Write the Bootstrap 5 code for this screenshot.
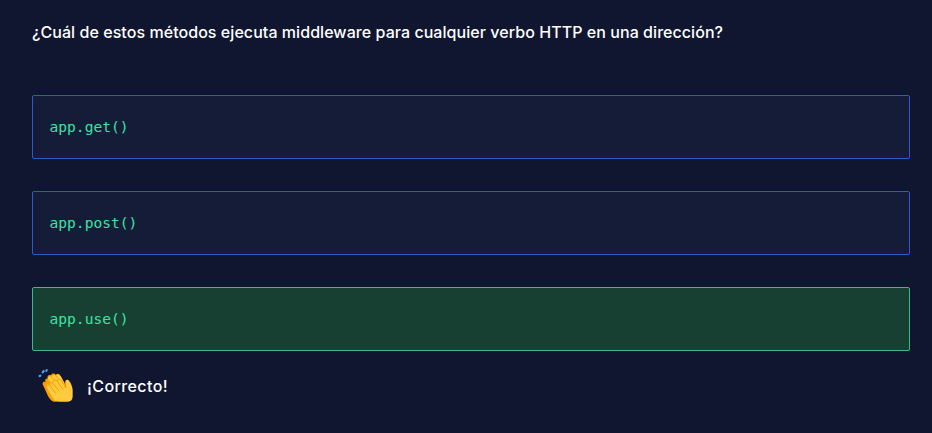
<!DOCTYPE html>
<html lang="es">
<head>
<meta charset="utf-8">
<meta name="viewport" content="width=device-width, initial-scale=1">
<title>Cuestionario</title>
<link rel="stylesheet" href="https://cdn.jsdelivr.net/npm/bootstrap@5.3.0/dist/css/bootstrap.min.css">
<style>
body{background:#10162f;color:#fff;font-family:Inter,"Liberation Sans",sans-serif;font-size:16px;overflow:hidden}
.quiz{padding:20px 22px 0 32px}
.question{font-size:16px;font-weight:500;line-height:24px;margin-bottom:51px;white-space:nowrap;letter-spacing:.055px}
.answers{gap:32px}
.answer{height:64px;padding:0 16.5px;border:1px solid #2a5bc9;border-radius:2px;background:#151c38}
.answer code{font-family:"DejaVu Sans Mono",monospace;font-size:14.6px;line-height:24px;color:#3ce3a4}
.answer-right{background:#184032;border-color:#3db88b}
.feedback{padding:15px 0 0 6px;gap:11px}
.feedback-text{font-weight:500;line-height:24px;padding-top:2px;letter-spacing:.4px}
</style>
<script src="https://cdn.jsdelivr.net/npm/bootstrap@5.3.0/dist/js/bootstrap.bundle.min.js"></script>
</head>
<body>
<main class="quiz">
  <h1 class="question"><span>¿Cuál de estos métodos ejecuta middleware para cualquier verbo HTTP en una dirección?</span></h1>
  <div class="answers d-flex flex-column">
    <div class="answer d-flex align-items-center"><code>app.get()</code></div>
    <div class="answer d-flex align-items-center"><code>app.post()</code></div>
    <div class="answer answer-right d-flex align-items-center"><code>app.use()</code></div>
  </div>
  <div class="feedback d-flex align-items-center">
    <svg width="38" height="38" viewBox="24 18 114 114" aria-hidden="true">
      <g stroke="#42a5f5" stroke-width="6.5" stroke-linecap="round">
        <path d="M29 48l2-1M38 37l3-4M49 33l1-3"/>
      </g>
      <path fill="#f59f00" d="M38 71c0-5 4-7 9-4-4-6 0-13 6-11-3-7 3-13 10-10 2-7 10-7 14-2 5-5 12-3 14 3l22 40-34 38H72c-8-2-13-8-18-17L40 77q-2-3-2-6z"/>
      <path fill="#ffca3e" d="M54 58c-2-8 6-12 11-6 0-7 8-10 13-4 4-6 11-5 14 1l12 21-24 18z"/>
      <path fill="#ffca3e" d="M50 76c1-4 6-4 9 0-2-6 4-11 9-7 0-8 7-12 13-6 3-7 11-6 15 1l10 15V65c0-6 8-8 12-1 4 4 6 10 8 16 3 7 2 16 2 29 0 10-5 16-15 16H87c-12 0-18-9-24-20L51 83q-2-4-1-7z"/>
      <g fill="none" stroke="#f59f00" stroke-width="3" stroke-linecap="round" stroke-linejoin="round">
        <path d="M59 76l17 22M68 69l19 24M81 63l18 25M96 64l12 20q0-9-2-16"/>
        <path d="M51 78c1-4 5-5 8-2-2-6 4-11 9-7-1-7 7-12 13-6 3-6 11-6 15 1"/>
        <path d="M65 52l9 9M78 48l8 10"/>
      </g>
    </svg>
    <div class="feedback-text"><span>¡Correcto!</span></div>
  </div>
</main>
</body>
</html>
